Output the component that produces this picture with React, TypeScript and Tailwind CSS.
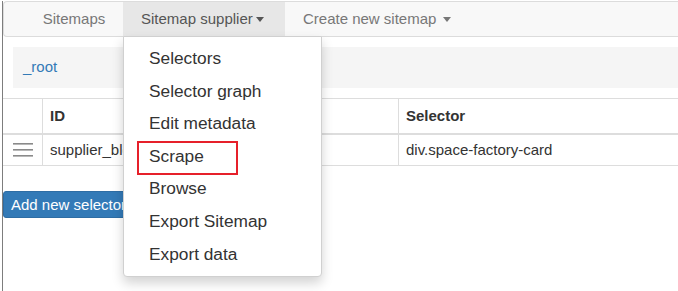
import React from "react";

const items = [
  "Selectors",
  "Selector graph",
  "Edit metadata",
  "Scrape",
  "Browse",
  "Export Sitemap",
  "Export data",
];

function Caret({ color }: { color: string }) {
  return (
    <span
      className="inline-block w-0 h-0 border-l-[4px] border-r-[4px] border-t-[5px] border-l-transparent border-r-transparent align-middle"
      style={{ borderTopColor: color }}
    />
  );
}

export default function App() {
  return (
    <div className="relative w-[678px] h-[291px] overflow-hidden bg-white pt-px pl-[2px] font-['Liberation_Sans',Arial,sans-serif]">
      <div className="h-full border-l border-[#7d7d7d]">
        {/* Navbar */}
        <div className="h-[36px] flex bg-[#f8f8f8] border-y border-l border-[#dcdcdc] rounded-l-[4px] pl-[21px] text-[15px]">
          <div className="w-[98px] flex items-center justify-center text-[#777]">Sitemaps</div>
          <div className="w-[162px] flex items-center pl-[18px] bg-[#e7e7e7] text-[#555]">
            <span>Sitemap supplier</span>
            <span className="ml-[3px] flex items-center">
              <Caret color="#555" />
            </span>
          </div>
          <div className="flex items-center pl-[18px] text-[#777]">
            <span>Create new sitemap</span>
            <span className="ml-[7px] flex items-center">
              <Caret color="#777" />
            </span>
          </div>
        </div>

        {/* Breadcrumb */}
        <div className="mt-[10px] ml-[10px] h-[41px] bg-[#f5f5f5] flex items-center pl-[10px] text-[15px] text-[#337ab7]">
          _root
        </div>

        {/* Table */}
        <div className="mt-[10px] text-[15px] text-[#333]">
          <div className="flex h-[37px] border-t border-b-2 border-[#dddddd] font-bold">
            <div className="w-[39px]" />
            <div className="w-[356px] border-l border-[#dddddd] flex items-center pl-[7px]">ID</div>
            <div className="flex-1 border-l border-[#dddddd] flex items-center pl-[7px]">Selector</div>
          </div>
          <div className="flex h-[31px] border-b border-[#dddddd]">
            <div className="w-[39px] flex items-center justify-center">
              <svg width="20" height="14" viewBox="0 0 20 14">
                <rect x="0" y="0" width="20" height="1.6" fill="#8a8a8a" />
                <rect x="0" y="6" width="20" height="1.6" fill="#8a8a8a" />
                <rect x="0" y="12" width="20" height="1.6" fill="#8a8a8a" />
              </svg>
            </div>
            <div className="w-[356px] border-l border-[#dddddd] flex items-center pl-[7px] whitespace-nowrap overflow-hidden">
              supplier_block
            </div>
            <div className="flex-1 border-l border-[#dddddd] flex items-center pl-[7px]">div.space-factory-card</div>
          </div>
        </div>

        {/* Button */}
        <div className="mt-[25px]">
          <button className="h-[27px] px-[7px] bg-[#337ab7] border border-[#2e6da4] rounded-[3px] text-white text-[15px] leading-none whitespace-nowrap">
            Add new selector
          </button>
        </div>
      </div>

      {/* Dropdown menu */}
      <div className="absolute left-[123px] top-[36px] w-[199px] bg-white border border-[#d0d0d0] rounded-b-[4px] shadow-[0_6px_12px_rgba(0,0,0,0.175)] pt-[5px] pb-[6px]">
        {items.map((it) => (
          <div key={it} className="pl-[25px] py-[4px] leading-[24.6px] text-[17.3px] text-[#333] whitespace-nowrap">
            {it}
          </div>
        ))}
      </div>

      {/* Red highlight */}
      <div className="absolute left-[137px] top-[141px] w-[101px] h-[34px] border-2 border-[#e6202a]" />
    </div>
  );
}
